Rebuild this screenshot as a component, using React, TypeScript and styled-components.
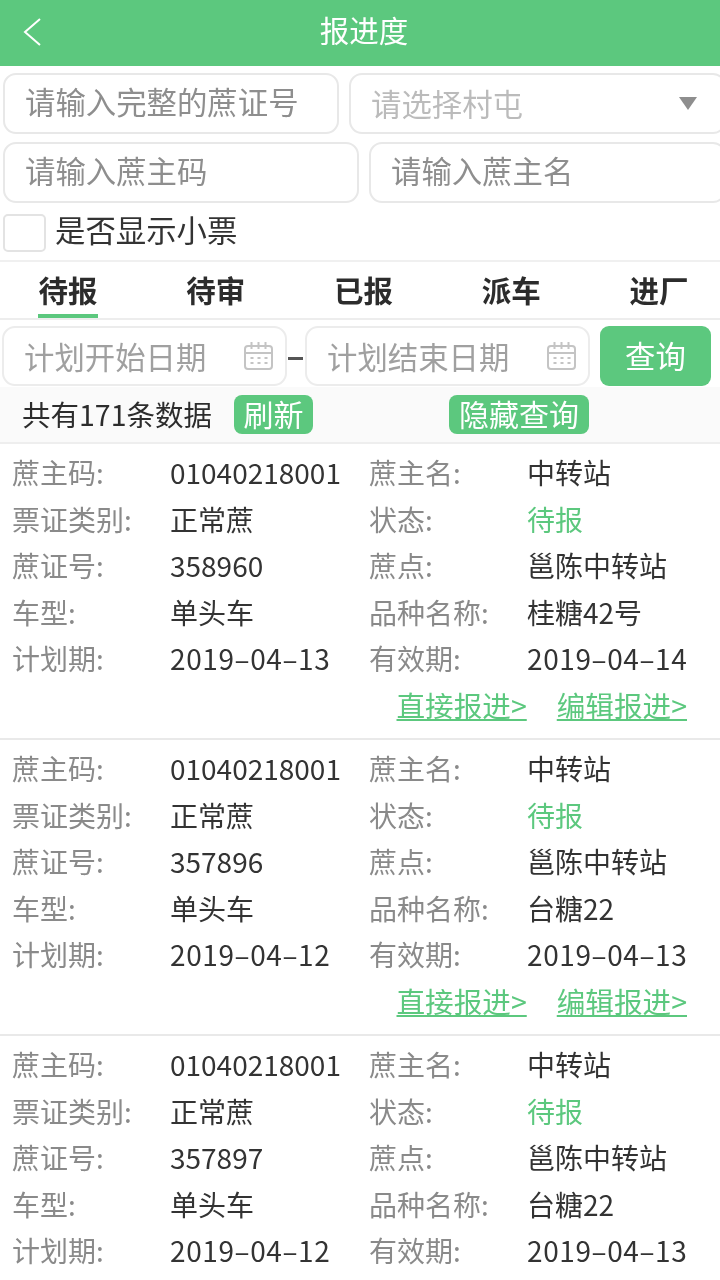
import React from 'react';
import styled, { createGlobalStyle } from 'styled-components';

const GREEN = '#5cc87e';
const FONT = '"Noto Sans CJK SC", "Liberation Sans", sans-serif';

type Ticket = {
  ticketNo: string;
  variety: string;
  planDate: string;
  validDate: string;
};

const tickets: Ticket[] = [
  { ticketNo: '358960', variety: '桂糖42号', planDate: '2019–04–13', validDate: '2019–04–14' },
  { ticketNo: '357896', variety: '台糖22', planDate: '2019–04–12', validDate: '2019–04–13' },
  { ticketNo: '357897', variety: '台糖22', planDate: '2019–04–12', validDate: '2019–04–13' },
];

const tabs = ['待报', '待审', '已报', '派车', '进厂'];

const CalendarIcon = () => (
  <CalendarSvg viewBox="0 0 30 30" fill="none" stroke="#c4c4c4" strokeWidth="2">
    <rect x="1.5" y="5" width="27" height="23" rx="3" />
    <path d="M1.5 12h27M8 1v7M15 1v7M22 1v7" />
    <path d="M7 17h3M14 17h3M21 17h3M7 22h3M14 22h3M21 22h3" />
  </CalendarSvg>
);

const App = () => {
  return (
    <Page>
      <GlobalStyle />
      <Header>
        <BackIcon viewBox="0 0 20 28" fill="none" stroke="#fff" strokeWidth="2">
          <path d="M18 1 3 14l15 13" />
        </BackIcon>
        <Title>报进度</Title>
      </Header>

      <FilterRow $top={7} $columns="336px 1fr">
        <TextInput placeholder="请输入完整的蔗证号" />
        <SelectBox>
          <span>请选择村屯</span>
          <Caret />
        </SelectBox>
      </FilterRow>
      <FilterRow $top={8} $columns="356px 1fr">
        <TextInput placeholder="请输入蔗主码" />
        <TextInput placeholder="请输入蔗主名" />
      </FilterRow>
      <CheckRow>
        <CheckBox />
        <CheckLabel>是否显示小票</CheckLabel>
      </CheckRow>

      <TabBar>
        {tabs.map((tab, i) => (
          <Tab key={tab} $active={i === 0}>
            {tab}
          </Tab>
        ))}
      </TabBar>

      <DateRow>
        <DateInput>
          <span>计划开始日期</span>
          <CalendarIcon />
        </DateInput>
        <Dash />
        <DateInput>
          <span>计划结束日期</span>
          <CalendarIcon />
        </DateInput>
        <QueryButton>查询</QueryButton>
      </DateRow>

      <SummaryBar>
        <span>共有171条数据</span>
        <Pill>刷新</Pill>
        <HidePill>隐藏查询</HidePill>
      </SummaryBar>

      {tickets.map(t => (
        <Card key={t.ticketNo}>
          <InfoGrid>
            <Label>蔗主码:</Label>
            <Value>01040218001</Value>
            <Label>蔗主名:</Label>
            <Value>中转站</Value>

            <Label>票证类别:</Label>
            <Value>正常蔗</Value>
            <Label>状态:</Label>
            <Value $green>待报</Value>

            <Label>蔗证号:</Label>
            <Value>{t.ticketNo}</Value>
            <Label>蔗点:</Label>
            <Value>邕陈中转站</Value>

            <Label>车型:</Label>
            <Value>单头车</Value>
            <Label>品种名称:</Label>
            <Value>{t.variety}</Value>

            <Label>计划期:</Label>
            <DateValue>{t.planDate}</DateValue>
            <Label>有效期:</Label>
            <DateValue>{t.validDate}</DateValue>
          </InfoGrid>
          <Actions>
            <ActionLink>直接报进&gt;</ActionLink>
            <ActionLink>编辑报进&gt;</ActionLink>
          </Actions>
        </Card>
      ))}
    </Page>
  );
};

const GlobalStyle = createGlobalStyle`
  html, body {
    margin: 0;
    padding: 0;
    background: #fff;
    overflow: hidden;
  }
  * {
    box-sizing: border-box;
  }
`;

const Page = styled.div`
  width: 720px;
  height: 1280px;
  overflow: hidden;
  background: #fff;
  font-family: ${FONT};
  font-size: 30.4px;
  line-height: 1.2;
  color: #333;
  filter: blur(0.7px);
`;

const Header = styled.div`
  position: relative;
  height: 66px;
  padding: 0 0 6px 8px;
  background: ${GREEN};
  display: flex;
  align-items: center;
  justify-content: center;
`;

const BackIcon = styled.svg`
  position: absolute;
  left: 22px;
  top: 18px;
  width: 20px;
  height: 28px;
`;

const Title = styled.div`
  color: #fff;
  font-size: 29.5px;
`;

const FilterRow = styled.div<{ $top: number; $columns: string }>`
  display: grid;
  grid-template-columns: ${props => props.$columns};
  gap: 10px;
  margin: ${props => props.$top}px -6px 0 3px;
  height: 61px;
`;

const TextInput = styled.input`
  width: 100%;
  height: 100%;
  padding: 0 20px 5px;
  border: 2px solid #e8e8e8;
  border-radius: 13px;
  background: #fff;
  outline: none;
  font-family: ${FONT};
  font-size: 30.4px;

  &::placeholder {
    color: #8e8e8e;
    opacity: 1;
  }
`;

const SelectBox = styled.div`
  display: flex;
  align-items: center;
  justify-content: space-between;
  padding: 0 27px 0 20px;
  border: 2px solid #e8e8e8;
  border-radius: 13px;
  color: #bbb;
`;

const Caret = styled.div`
  width: 0;
  height: 0;
  border-left: 9px solid transparent;
  border-right: 9px solid transparent;
  border-top: 13px solid #8e8e8e;
`;

const CheckRow = styled.div`
  display: flex;
  align-items: center;
  gap: 9px;
  margin: 11px 0 0 3px;
  height: 38px;
  color: #333;
`;

const CheckLabel = styled.span`
  padding-bottom: 8px;
`;

const CheckBox = styled.div`
  width: 43px;
  height: 38px;
  border: 2px solid #e3e3e3;
  border-radius: 5px;
`;

const TabBar = styled.div`
  display: flex;
  justify-content: space-between;
  margin-top: 8px;
  height: 60px;
  padding: 0 31px 0 38px;
  border-top: 2px solid #f0f0f0;
  border-bottom: 2px solid #ededed;
`;

const Tab = styled.div<{ $active?: boolean }>`
  position: relative;
  display: flex;
  align-items: center;
  justify-content: center;
  width: 60px;
  font-size: 29.5px;
  font-weight: 700;
  color: #2c2c2c;

  &::after {
    content: '';
    display: ${props => (props.$active ? 'block' : 'none')};
    position: absolute;
    left: 0;
    right: 0;
    bottom: 0;
    height: 4px;
    background: ${GREEN};
  }
`;

const DateRow = styled.div`
  display: flex;
  align-items: center;
  height: 60px;
  margin-top: 6px;
  padding-left: 2px;
`;

const DateInput = styled.div`
  display: flex;
  align-items: center;
  justify-content: space-between;
  width: 285px;
  height: 60px;
  padding: 0 11px 0 20px;
  border: 2px solid #ececec;
  border-radius: 13px;
  color: #a0a0a0;
`;

const CalendarSvg = styled.svg`
  width: 31px;
  height: 30px;
`;

const Dash = styled.div`
  width: 15px;
  height: 3px;
  margin: 4px 2px 0 1px;
  background: #555;
`;

const QueryButton = styled.div`
  display: flex;
  align-items: center;
  justify-content: center;
  width: 111px;
  height: 60px;
  margin-left: 10px;
  padding-bottom: 2px;
  border-radius: 9px;
  background: ${GREEN};
  color: #fff;
`;

const SummaryBar = styled.div`
  display: flex;
  align-items: center;
  height: 57px;
  margin-top: 1px;
  padding-left: 22px;
  background: #fafafa;
  border-bottom: 2px solid #eeeeee;
  font-size: 28.5px;
  color: #2c2c2c;
`;

const Pill = styled.div`
  display: flex;
  align-items: center;
  justify-content: center;
  height: 39px;
  width: 79px;
  margin-left: 22px;
  padding-bottom: 3px;
  border-radius: 8px;
  background: ${GREEN};
  font-size: 30px;
  color: #fff;
`;

const HidePill = styled(Pill)`
  width: 140px;
  margin-left: 136px;
`;

const Card = styled.div`
  height: 296px;
  padding: 6px 0 0 12px;
  border-bottom: 2px solid #e9e9e9;
`;

const InfoGrid = styled.div`
  display: grid;
  grid-template-columns: 158px 199px 158px 1fr;
  grid-auto-rows: 46.5px;
  align-items: center;
  font-size: 28px;
  white-space: nowrap;
`;

const Label = styled.div`
  color: #8a8a8a;
`;

const Value = styled.div<{ $green?: boolean }>`
  color: ${props => (props.$green ? GREEN : '#333')};
`;

const DateValue = styled(Value)`
  letter-spacing: 0.6px;
`;

const Actions = styled.div`
  display: flex;
  justify-content: flex-end;
  gap: 30px;
  height: 46px;
  align-items: center;
  padding-right: 33px;
`;

const ActionLink = styled.a`
  font-size: 28.6px;
  color: ${GREEN};
  text-decoration: underline;
`;

export default App;
